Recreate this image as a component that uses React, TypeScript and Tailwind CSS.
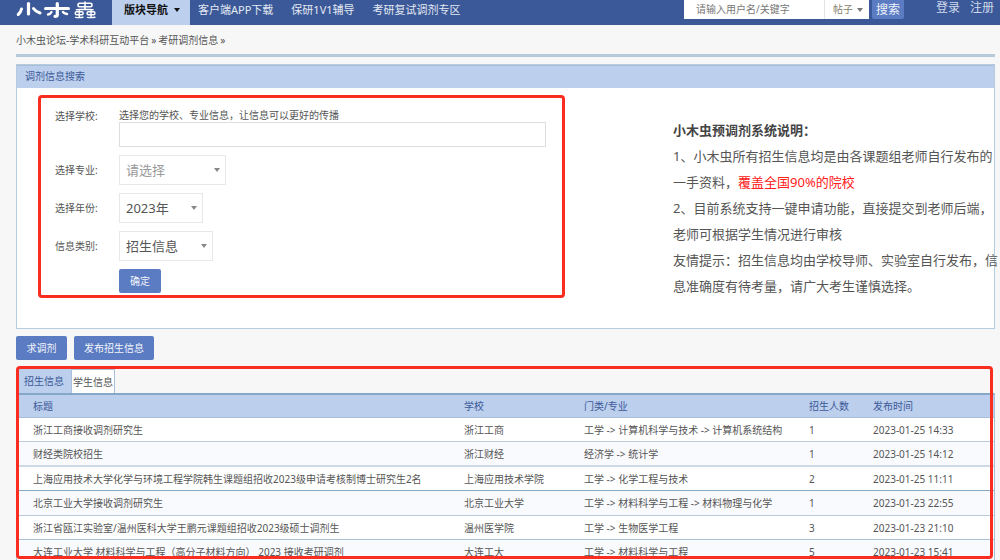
import React from "react";

const navLinks = ["客户端APP下载", "保研1V1辅导", "考研复试调剂专区"];

const rows = [
  { title: "浙江工商接收调剂研究生", school: "浙江工商", major: "工学 -> 计算机科学与技术 -> 计算机系统结构", count: 1, time: "2023-01-25 14:33", line: "h-6 border-b border-[#b9cbdc]" },
  { title: "财经类院校招生", school: "浙江财经", major: "经济学 -> 统计学", count: 1, time: "2023-01-25 14:12", line: "h-[25px] border-b-2 border-[#cddae6]" },
  { title: "上海应用技术大学化学与环境工程学院韩生课题组招收2023级申请考核制博士研究生2名", school: "上海应用技术学院", major: "工学 -> 化学工程与技术", count: 2, time: "2023-01-25 11:11", line: "h-6 border-b border-[#86a8c8]" },
  { title: "北京工业大学接收调剂研究生", school: "北京工业大学", major: "工学 -> 材料科学与工程 -> 材料物理与化学", count: 1, time: "2023-01-23 22:55", line: "h-[25px] border-b border-[#b9cbdc]" },
  { title: "浙江省瓯江实验室/温州医科大学王鹏元课题组招收2023级硕士调剂生", school: "温州医学院", major: "工学 -> 生物医学工程", count: 3, time: "2023-01-23 21:10", line: "h-6 border-b border-[#a9c2d9]" },
  { title: "大连工业大学 材料科学与工程（高分子材料方向） 2023 接收考研调剂", school: "大连工大", major: "工学 -> 材料科学与工程", count: 5, time: "2023-01-23 15:41", line: "h-[25px] border-b border-[#b9cbdc]" },
];

function Logo() {
  return (
    <svg width="82" height="20" viewBox="0 0 82 20" fill="none" stroke="#fff" strokeLinecap="round" strokeLinejoin="round" aria-label="小木虫">
      <path d="M5.500 9C5 11.500 4 13 2.200 14.500" strokeWidth="3" />
      <path d="M12.500 3.500V14" strokeWidth="3.200" />
      <path d="M17.500 8.500Q19.500 11.500 24 13" strokeWidth="3" />
      <path d="M29.500 8.500H52.500" strokeWidth="3" />
      <path d="M41.300 3.500V15Q41.300 16.300 39 16.300" strokeWidth="3.200" />
      <path d="M35.500 12Q34.500 14 32 14.500M47 12Q48 13.500 51 14" strokeWidth="2.400" />
      <rect x="62" y="3.200" width="14" height="3.600" rx="1.500" strokeWidth="1.600" />
      <path d="M69 2V9.500M60.500 9.700Q69 8.700 77 9.700" strokeWidth="1.600" />
      <rect x="59.200" y="11.800" width="8" height="3" rx="1.500" strokeWidth="1.400" />
      <rect x="71" y="11.800" width="8" height="3" rx="1.500" strokeWidth="1.400" />
      <path d="M63.200 10.500V17M75 10.500V17M59.500 17.400Q63.500 18 67 17.200M71.500 17.400Q75.500 18 79 17.200" strokeWidth="1.400" />
    </svg>
  );
}

function Caret({ className }: { className: string }) {
  return (
    <svg className={`pointer-events-none absolute top-1/2 -translate-y-1/2 ${className}`} width="6" height="4" viewBox="0 0 6 4" fill="currentColor" aria-hidden="true">
      <path d="M0 0H6L3 4Z" />
    </svg>
  );
}

function Field({ id, label, width, tone, options }: { id: string; label: string; width: string; tone: string; options: string[] }) {
  return (
    <div className="flex items-center">
      <label htmlFor={id} className="w-16 shrink-0">{label}</label>
      <div className={`relative ${width}`}>
        <select id={id} className={`block h-[30px] w-full appearance-none border border-[#e8e8e8] bg-white pl-1.5 text-[13px] ${tone}`}>
          {options.map((o) => <option key={o}>{o}</option>)}
        </select>
        <Caret className="right-1.5 text-[#888]" />
      </div>
    </div>
  );
}

export default function App() {
  return (
    <div className="min-h-screen bg-[#f7f7f7] font-['Noto_Sans','Noto_Sans_CJK_SC',sans-serif] text-[10px] leading-4 text-[#555]">
      <header className="flex h-[25px] items-start bg-[#3b5998] pl-4 pr-1.5 text-[#e4e9f3]">
        <a href="#" className="w-24 shrink-0"><Logo /></a>
        <nav className="flex text-[11px] leading-[19px]">
          <button type="button" className="relative h-[25px] w-[78px] bg-[#bccfed] pb-1.5 pl-3 text-left font-bold text-[#111]">
            版块导航
            <Caret className="right-2.5 -mt-[3px]" />
          </button>
          <div className="flex gap-[18px] pl-2">
            {navLinks.map((l) => <a key={l} href="#" className="whitespace-nowrap">{l}</a>)}
          </div>
        </nav>
        <form className="ml-auto flex h-[19px]" onSubmit={(e) => e.preventDefault()}>
          <input aria-label="搜索内容" placeholder="请输入用户名/关键字" className="h-[19px] w-[140px] bg-white pb-0.5 pl-3 text-[10px] text-[#555] placeholder:text-[#777]" />
          <div className="relative h-[19px] w-[45px] border-l border-[#e4e4e4] bg-white">
            <select aria-label="搜索类型" className="block h-full w-full appearance-none pb-0.5 pl-2 text-[10px] text-[#857f6c]">
              <option>帖子</option>
            </select>
            <Caret className="right-1.5 text-[#777]" />
          </div>
          <button type="submit" className="ml-[3px] w-8 rounded-b-xs bg-[#5b7bc2] text-[12px] leading-[19px] text-[#eef2fa]">搜索</button>
        </form>
        <div className="ml-8 flex gap-2.5 text-[12px] leading-[15px] text-[#cfd8ea]">
          <a href="#">登录</a>
          <a href="#">注册</a>
        </div>
      </header>

      <main className="pl-4 pr-[5px]">
        <div className="flex h-8 items-center border-b-[3px] border-[#b7cad9]">
          <a href="#">小木虫论坛-学术科研互动平台</a>
          <span className="px-0.5">»</span>
          <a href="#">考研调剂信息</a>
          <span className="px-0.5">»</span>
        </div>

        <section className="mt-[7px] border border-[#b5cbe0] bg-white">
          <h2 className="h-[23px] border-t border-[#a9bfd6] bg-[#bccfed] pl-2 leading-[21px] text-[#3b5998]">调剂信息搜索</h2>
          <div className="flex items-start pb-[29px] pt-[7px]">
            <form className="ml-[21px] mr-[108px] flex min-w-0 flex-1 flex-col gap-2 rounded-sm border-[3px] border-[#fb2c20] pb-0.5 pl-3.5 pr-4 pt-2.5" onSubmit={(e) => e.preventDefault()}>
              <div className="flex">
                <label htmlFor="school" className="w-16 shrink-0">选择学校:</label>
                <div className="min-w-0 flex-1">
                  <p className="h-[14px] leading-[15px]">选择您的学校、专业信息，让信息可以更好的传播</p>
                  <input id="school" className="block h-[25px] w-full border border-[#ddd] bg-white px-1.5 text-[13px]" />
                </div>
              </div>
              <Field id="major" label="选择专业:" width="w-[107px]" tone="text-[#999]" options={["请选择"]} />
              <Field id="year" label="选择年份:" width="w-[84px]" tone="text-[#555]" options={["2023年"]} />
              <Field id="kind" label="信息类别:" width="w-[94px]" tone="text-[#555]" options={["招生信息"]} />
              <button type="submit" className="ml-16 h-6 w-[42px] rounded-xs bg-[#5b7bc2] text-[#f2f5fb]">确定</button>
            </form>
            <div className="mt-[22px] w-[321px] shrink-0 whitespace-nowrap text-[13px] leading-[26px]">
              <h3 className="font-bold text-[#444]">小木虫预调剂系统说明：</h3>
              <p>1、小木虫所有招生信息均是由各课题组老师自行发布的<br />一手资料，<span className="text-[#ff2020]">覆盖全国90%的院校</span></p>
              <p>2、目前系统支持一键申请功能，直接提交到老师后端，<br />老师可根据学生情况进行审核</p>
              <p>友情提示：招生信息均由学校导师、实验室自行发布，信<br />息准确度有待考量，请广大考生谨慎选择。</p>
            </div>
          </div>
        </section>

        <div className="mt-[7px] flex gap-[7px] text-[#f2f5fb]">
          <button type="button" className="h-6 w-[51px] rounded-xs bg-[#5b7bc2]">求调剂</button>
          <button type="button" className="h-6 w-20 rounded-xs bg-[#5b7bc2]">发布招生信息</button>
        </div>

        <section className="relative mt-1.5">
          <div className="flex h-[27px] pl-px pt-[3px]" role="tablist">
            <button type="button" role="tab" aria-selected="true" className="w-[54px] bg-[#bccfed] text-[#3b5998]">招生信息</button>
            <button type="button" role="tab" aria-selected="false" className="flex w-11 items-center justify-center whitespace-nowrap border-x border-t border-[#a9c2d9] bg-white">学生信息</button>
          </div>
          <table className="w-full table-fixed border-separate border-spacing-0 border-x border-[#a9c2d9] text-left">
            <thead>
              <tr className="bg-[#bccfed] text-[#3b5998] [&>th]:h-[25px] [&>th]:border-b [&>th]:border-t-2 [&>th]:border-b-[#a9bfdd] [&>th]:border-t-[#86a8c8] [&>th]:pl-4 [&>th]:font-normal">
                <th>标题</th>
                <th className="w-[120px]">学校</th>
                <th className="w-[225px]">门类/专业</th>
                <th className="w-16">招生人数</th>
                <th className="w-[137px]">发布时间</th>
              </tr>
            </thead>
            <tbody className="[&>tr:nth-child(even)]:bg-[#f9fafd] [&>tr:nth-child(odd)]:bg-white">
              {rows.map((r) => (
                <tr key={r.title} className="whitespace-nowrap">
                  <td className={`pl-4 ${r.line}`}><a href="#">{r.title}</a></td>
                  <td className={`pl-4 ${r.line}`}>{r.school}</td>
                  <td className={`pl-4 ${r.line}`}>{r.major}</td>
                  <td className={`pl-4 ${r.line}`}>{r.count}</td>
                  <td className={`pl-4 ${r.line}`}>{r.time}</td>
                </tr>
              ))}
            </tbody>
          </table>
          <div className="pointer-events-none absolute bottom-1.5 left-0 right-0.5 top-0 rounded-sm border-[3px] border-[#fb2c20]" />
        </section>
      </main>
    </div>
  );
}
